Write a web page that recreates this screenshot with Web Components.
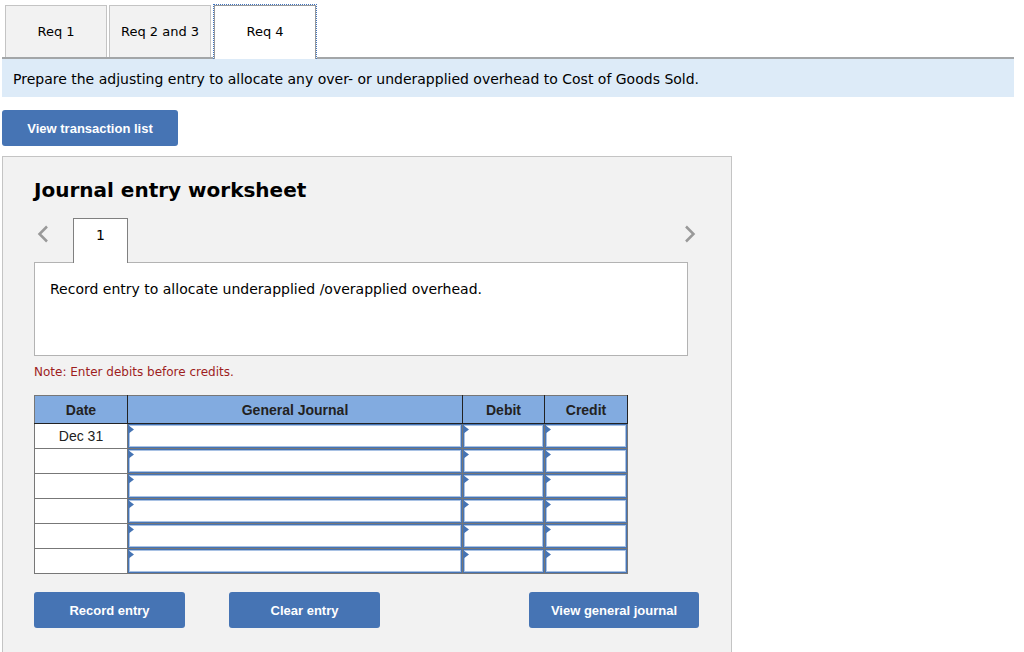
<!DOCTYPE html>
<html lang="en">
<head>
<meta charset="utf-8">
<meta name="viewport" content="width=device-width, initial-scale=1">
<title>Journal entry worksheet</title>
<style>
  body { margin: 0; background: #fff; color: #000; font-family: "DejaVu Sans", Verdana, sans-serif; font-size: 14px; line-height: 20px; }
</style>
</head>
<body>
<exercise-page></exercise-page>

<template id="exercise-page">
  <style>
    :host { display: block; padding: 4px 10px 0 2px; }
    action-button { margin: 13px 0 10px; }
  </style>
  <req-tabs>
    <req-tab>Req 1</req-tab>
    <req-tab>Req 2 and 3</req-tab>
    <req-tab selected>Req 4</req-tab>
  </req-tabs>
  <instruction-banner>Prepare the adjusting entry to allocate any over- or underapplied overhead to Cost of Goods Sold.</instruction-banner>
  <action-button style="--w: 176px">View transaction list</action-button>
  <journal-worksheet></journal-worksheet>
</template>

<template id="req-tabs">
  <style>
    :host { display: flex; gap: 2px; padding-left: 3px; border-bottom: 2px solid #a3a6a8; font-size: 13px; }
  </style>
  <slot></slot>
</template>

<template id="req-tab">
  <style>
    :host { display: block; }
    button { display: block; box-sizing: border-box; width: 102px; height: 52px; margin: 1px 0 0; padding: 0; border: 1px solid #c4c4c4; border-bottom: 0; background: #f2f2f2; color: #000; font: inherit; white-space: nowrap; }
    :host([selected]) button { width: 104px; height: 55px; margin: 0 0 -2px; border: 1px dotted #3f74c0; border-bottom: 0; background: #fff; box-shadow: inset 1px 1px #999, inset -1px 0 #999; }
  </style>
  <button type="button" role="tab"><slot></slot></button>
</template>

<template id="instruction-banner">
  <style>
    :host { display: block; padding: 10px 11px 8px; background: #ddebf8; }
  </style>
  <slot></slot>
</template>

<template id="action-button">
  <style>
    :host { display: block; }
    button { display: block; width: var(--w, 151px); height: 36px; padding: 2px 0 0; border: 0; border-radius: 3px; background: #4674b4; color: #fff; font: bold 13px/20px "Liberation Sans", Arial, sans-serif; }
  </style>
  <button type="button"><slot></slot></button>
</template>

<template id="journal-worksheet">
  <style>
    :host { display: block; box-sizing: border-box; max-width: 730px; padding: 21px 43px 24px 31px; border: 1px solid #c4c4c4; background: #f2f2f2; }
    h2 { margin: 0; font-size: 20px; line-height: 24px; }
    .note { margin: 6px 0 13px; color: #9e1e1e; font-size: 12px; }
    .actions { display: flex; gap: 44px; margin: 18px -11px 0 0; }
    .actions :last-child { margin-left: auto; }
  </style>
  <h2>Journal entry worksheet</h2>
  <entry-pager>Record entry to allocate underapplied /overapplied overhead.</entry-pager>
  <p class="note">Note: Enter debits before credits.</p>
  <journal-table></journal-table>
  <div class="actions">
    <action-button>Record entry</action-button>
    <action-button>Clear entry</action-button>
    <action-button style="--w: 170px">View general journal</action-button>
  </div>
</template>

<template id="entry-pager">
  <style>
    :host { display: block; margin-top: 16px; }
    nav { display: flex; align-items: flex-start; margin-right: -9px; }
    button { border: 0; margin: 0; padding: 0; background: none; color: #000; font: inherit; }
    .arrow { width: 18px; height: 32px; }
    .arrow svg { display: block; }
    .next { margin-left: auto; }
    .page { box-sizing: border-box; width: 55px; height: 45px; margin: 0 0 -1px 21px; padding-bottom: 12px; border: 1px solid #808080; border-bottom: 0; background: #fff; position: relative; }
    .text { box-sizing: border-box; min-height: 94px; padding: 16px 15px; border: 1px solid #b3b3b3; background: #fff; }
    path { fill: none; stroke: #999; stroke-width: 2.5; }
  </style>
  <nav aria-label="Entries">
    <button type="button" class="arrow" aria-label="Previous entry"><svg width="18" height="32"><path d="M13 8.500 5.500 16 13 23.500"/></svg></button>
    <button type="button" class="page">1</button>
    <button type="button" class="arrow next" aria-label="Next entry"><svg width="18" height="32"><path d="M7 8.500 14.500 16 7 23.500"/></svg></button>
  </nav>
  <div class="text"><slot></slot></div>
</template>

<template id="journal-table">
  <style>
    :host { display: block; max-width: 594px; font-family: "Liberation Sans", Arial, sans-serif; color: #222; }
    table { width: 100%; table-layout: fixed; border-collapse: collapse; background: #fff; font-size: 14px; }
    th, td { padding: 0; border: 1px solid #777; text-align: center; }
    th { height: 27px; background: #82abe0; border-color: #222; border-top-color: #777; }
    th:first-child { border-left-color: #777; }
    td { height: 24px; }
    .date { width: 93px; }
    .amount { width: 82px; }
    .credit { width: 83px; }
  </style>
  <table>
    <colgroup><col class="date"><col><col class="amount"><col class="credit"></colgroup>
    <thead><tr><th scope="col">Date</th><th scope="col">General Journal</th><th scope="col">Debit</th><th scope="col">Credit</th></tr></thead>
    <tbody></tbody>
  </table>
</template>

<template id="entry-cell">
  <style>
    :host { display: block; position: relative; }
    input { display: block; box-sizing: border-box; width: 100%; height: 24px; margin: 0; padding: 0 8px; border: 1px solid #4674b4; border-radius: 0; box-shadow: inset 0 0 0 1px #a9c2e4; background: #fff; font: inherit; }
    svg { position: absolute; left: 0; top: 1px; pointer-events: none; }
  </style>
  <input type="text">
  <svg width="6" height="9"><path d="M0 0 6 4.500 0 9Z" fill="#4674b4"/></svg>
</template>

<script>
  class TemplateElement extends HTMLElement {
    constructor() {
      super();
      this.attachShadow({ mode: 'open' }).append(
        document.getElementById(this.localName).content.cloneNode(true));
    }
  }

  class EntryCell extends TemplateElement {
    connectedCallback() {
      this.shadowRoot.querySelector('input').setAttribute('aria-label', this.getAttribute('label'));
    }
  }

  class ReqTabs extends TemplateElement {
    connectedCallback() { this.setAttribute('role', 'tablist'); }
  }

  class JournalTable extends TemplateElement {
    connectedCallback() {
      const body = this.shadowRoot.querySelector('tbody');
      if (body.rows.length) return;
      ['Dec 31', '', '', '', '', ''].forEach((date, i) => {
        const row = body.insertRow();
        row.insertCell().textContent = date;
        for (const name of ['General Journal', 'Debit', 'Credit']) {
          const cell = document.createElement('entry-cell');
          cell.setAttribute('label', `${name}, line ${i + 1}`);
          row.insertCell().append(cell);
        }
      });
    }
  }

  customElements.define('entry-cell', EntryCell);
  customElements.define('journal-table', JournalTable);
  customElements.define('req-tabs', ReqTabs);
  for (const name of ['req-tab', 'instruction-banner', 'action-button', 'entry-pager', 'journal-worksheet', 'exercise-page']) {
    customElements.define(name, class extends TemplateElement {});
  }
</script>
</body>
</html>
